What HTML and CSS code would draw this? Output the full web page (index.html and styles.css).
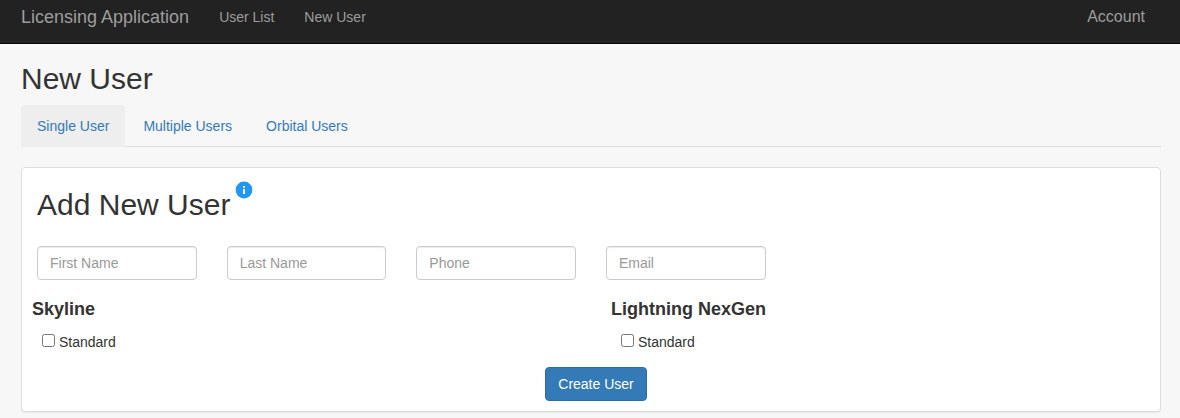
FILE: index.html
```html
<!DOCTYPE html>
<html lang="en">
<head>
<meta charset="utf-8">
<title>New User</title>
<link rel="stylesheet" href="styles.css">
</head>
<body>
<nav class="navbar">
  <a class="brand">Licensing Application</a>
  <a class="nav-link">User List</a>
  <a class="nav-link">New User</a>
  <a class="account">Account</a>
</nav>
<main class="page">
  <h2 class="title">New User</h2>
  <div class="tabs">
    <a class="tab active">Single User</a>
    <a class="tab">Multiple Users</a>
    <a class="tab">Orbital Users</a>
  </div>
  <section class="panel">
    <h2 class="panel-title">Add New User
      <svg class="info" viewBox="0 0 18 18"><circle cx="9" cy="9" r="8.4" fill="#2196f3"/><path d="M8 8h2v5H8zM8 5h2v1.8H8z" fill="#fff"/></svg>
    </h2>
    <div class="fields">
      <input class="field" placeholder="First Name">
      <input class="field" placeholder="Last Name">
      <input class="field" placeholder="Phone">
      <input class="field" placeholder="Email">
    </div>
    <div class="products">
      <div class="product"><h4 class="product-name">Skyline</h4><label class="option"><input class="check" type="checkbox">Standard</label></div>
      <div class="product"><h4 class="product-name">Lightning NexGen</h4><label class="option"><input class="check" type="checkbox">Standard</label></div>
    </div>
    <div class="actions"><button class="create">Create User</button></div>
  </section>
</main>
</body>
</html>
```
FILE: styles.css
```css
* { box-sizing: border-box; }
body { margin: 0; height: 418px; overflow: hidden; background: #f7f7f7; color: #333; font: 14px/20px "Liberation Sans", Arial, sans-serif; }
.navbar { display: flex; height: 44px; padding: 7px 35px 0 21px; background: #222; border-bottom: 1px solid #080808; color: #9d9d9d; }
.brand { font-size: 18px; margin-right: 15px; }
.nav-link { padding: 0 15px; }
.account { margin-left: auto; font-size: 16px; }
.page { padding: 18px 19px 0 21px; }
.title { margin: 0 0 10px; font-size: 30px; line-height: 33px; font-weight: 500; }
.tabs { display: flex; gap: 2px; height: 42px; border-bottom: 1px solid #ddd; }
.tab { padding: 11px 16px; height: 42px; color: #337ab7; border-radius: 4px 4px 0 0; }
.active { background: #eee; }
.panel { margin-top: 20px; height: 245px; padding: 13px 15px 0; background: #fff; border: 1px solid #ddd; border-radius: 4px; box-shadow: 0 1px 1px rgba(0,0,0,.05); }
.panel-title { display: flex; gap: 5px; margin: 0; height: 65px; font-size: 30px; line-height: 48px; font-weight: 500; }
.info { width: 18px; height: 18px; }
.fields { display: flex; gap: 30px; }
.field { width: 159.66px; height: 34px; padding: 6px 12px; border: 1px solid #ccc; border-radius: 4px; font: inherit; box-shadow: inset 0 1px 1px rgba(0,0,0,.075); }
.field::placeholder { color: #999; }
.products { display: grid; grid-template-columns: 579px 1fr; margin: 19px -5px 0; }
.product-name { margin: 0; font-size: 18px; line-height: 20px; }
.option { display: flex; margin: 13px 0 0 10px; }
.check { width: 13px; height: 13px; margin: 2px 4px 0 0; }
.actions { display: flex; justify-content: center; margin-top: 15px; padding-left: 10px; }
.create { height: 34px; padding: 6px 12px; color: #fff; background: #337ab7; border: 1px solid #2e6da4; border-radius: 4px; font: inherit; }
```
